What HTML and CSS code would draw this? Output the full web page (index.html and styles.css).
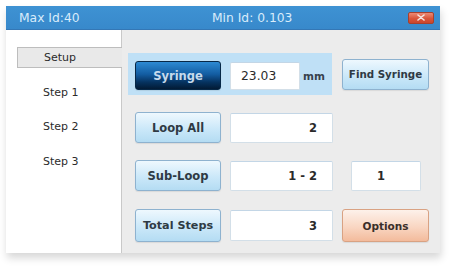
FILE: index.html
```html
<!DOCTYPE html>
<html>
<head>
<meta charset="utf-8">
<link rel="stylesheet" href="styles.css">
</head>
<body>
<div class="window">
  <div class="titlebar">
    <span class="t-max">Max Id:40</span>
    <span class="t-min">Min Id: 0.103</span>
    <span class="close"><svg width="8" height="7" viewBox="0 0 8 7"><path d="M1 1 L7 6 M7 1 L1 6" stroke="#f4e6e2" stroke-width="1.6" stroke-linecap="round"/></svg></span>
  </div>
  <div class="body">
    <div class="sidebar">
      <div class="tab active">Setup</div>
      <div class="tab">Step 1</div>
      <div class="tab">Step 2</div>
      <div class="tab">Step 3</div>
    </div>
    <div class="pane">
      <div class="row row-first">
        <div class="band">
          <button class="btn btn-dark">Syringe</button>
          <div class="field field-short left">23.03</div>
          <span class="unit">mm</span>
        </div>
        <button class="btn btn-small btn-find">Find Syringe</button>
      </div>
      <div class="row">
        <button class="btn">Loop All</button>
        <div class="field num">2</div>
      </div>
      <div class="row">
        <button class="btn">Sub-Loop</button>
        <div class="field num">1 - 2</div>
        <div class="field field-short center num">1</div>
      </div>
      <div class="row row-last">
        <button class="btn">Total Steps</button>
        <div class="field num">3</div>
        <button class="btn btn-small btn-orange">Options</button>
      </div>
    </div>
  </div>
</div>
</body>
</html>
```

FILE: styles.css
```css
html, body {
  margin: 0;
  padding: 0;
  background: #ffffff;
  width: 452px;
  height: 268px;
  overflow: hidden;
  font-family: "DejaVu Sans", Verdana, sans-serif;
}

.window {
  margin: 6px 0 0 6px;
  width: 434px;
  height: 247px;
  display: flex;
  flex-direction: column;
  box-shadow: 1px 5px 8px rgba(0, 0, 0, 0.16);
}

.titlebar {
  height: 24px;
  flex: none;
  display: grid;
  grid-template-columns: 193px 1fr 26px;
  align-items: center;
  padding: 0 6px 0 13px;
  background: linear-gradient(#3e92d3, #3889cb);
  border-bottom: 1px solid #3477b5;
  box-sizing: border-box;
  color: #d9ecfb;
  font-size: 12.3px;
}

.close {
  width: 26px;
  height: 12px;
  border-radius: 2px;
  background: linear-gradient(#ec8a74, #d9553a 55%, #c9462d);
  border: 1px solid #a8402c;
  box-sizing: border-box;
  display: flex;
  align-items: center;
  justify-content: center;
}

.body {
  flex: 1;
  display: flex;
  min-height: 0;
}

.sidebar {
  width: 115px;
  flex: none;
  background: #ffffff;
  border-right: 1px solid #c9c9c9;
  padding-top: 17px;
  display: flex;
  flex-direction: column;
  gap: 13.5px;
}

.tab {
  height: 21px;
  line-height: 21px;
  padding-left: 37px;
  font-size: 11px;
  color: #2b2b2b;
  box-sizing: border-box;
}

.tab.active {
  margin-left: 11px;
  padding-left: 26px;
  margin-right: -1px;
  background: #e9e9e9;
  border: 1px solid #bdbdbd;
  border-right: none;
  line-height: 19px;
}

.pane {
  flex: 1;
  background: #ececec;
  padding: 23px 0 0 6px;
  display: flex;
  flex-direction: column;
}

.row {
  display: flex;
  align-items: center;
  gap: 9px;
  padding-left: 7px;
  height: 31px;
  margin-top: 17px;
}

.row-first {
  height: auto;
  margin-top: 0;
  padding-left: 0;
  gap: 10px;
}

.row-last {
  height: 33px;
  margin-top: 18px;
}

.band {
  display: flex;
  align-items: center;
  background: #bfe0f6;
  padding: 8px 0 5px 7px;
  width: 204px;
  box-sizing: border-box;
  gap: 9px;
}

.btn {
  width: 86px;
  height: 31px;
  padding: 0;
  margin: 0;
  border: 1px solid #8eb2cf;
  border-radius: 3px;
  background: linear-gradient(#eef8fe, #cbe8f9 55%, #b4dcf3);
  color: #2f3a44;
  font-family: "DejaVu Sans", Verdana, sans-serif;
  font-weight: bold;
  font-size: 11.5px;
  box-shadow: 0 1px 1px rgba(0, 0, 0, 0.08);
}

.row-last .btn {
  height: 33px;
  font-size: 11.2px;
}

.btn-dark {
  height: 29px;
  border: 1px solid #072847;
  background: linear-gradient(#2d8ad3, #135da2 45%, #06325f 75%, #021b35);
  color: #c6daec;
}

.btn-small {
  width: 87px;
  font-size: 10.3px;
}

.btn-find {
  height: 31px;
}

.row-last .btn-orange {
  margin-left: 0;
  font-size: 10.5px;
  border: 1px solid #d9a283;
  background: linear-gradient(#fdf1ea, #f9d6c2 55%, #f3bb9c);
  color: #3a2f2a;
}

.field {
  width: 103px;
  height: 30px;
  background: #ffffff;
  border: 1px solid #d3dfe8;
  border-top-color: #c3d6e6;
  border-radius: 2px;
  box-sizing: border-box;
  display: flex;
  align-items: center;
  justify-content: flex-end;
  padding: 0 15px;
  color: #2a2a2a;
  font-size: 11.5px;
  font-weight: bold;
}

.row-last .field {
  height: 31px;
}

.field-short {
  width: 70px;
}

.field.left {
  justify-content: flex-start;
  padding-left: 10px;
  font-weight: normal;
  font-size: 12.3px;
  height: 28px;
}

.field.center {
  justify-content: center;
  padding: 0 10px 0 0;
  margin-left: 9px;
}

.unit {
  margin-left: -6px;
  font-size: 10.5px;
  font-weight: bold;
  color: #37424c;
}
```
